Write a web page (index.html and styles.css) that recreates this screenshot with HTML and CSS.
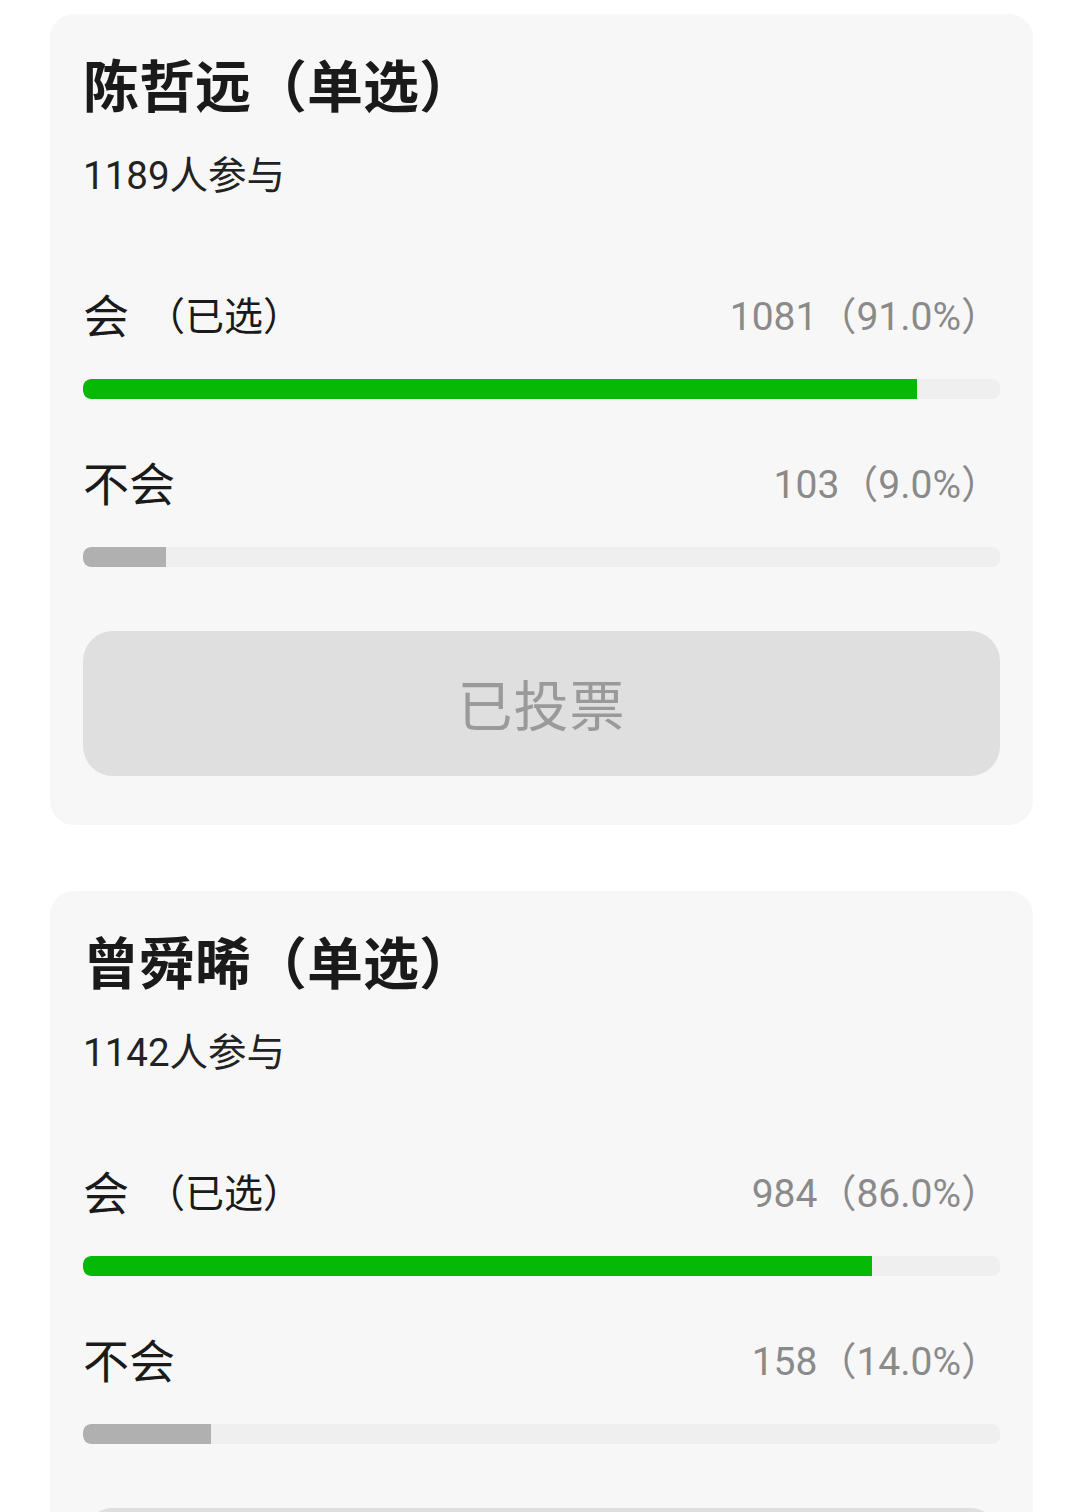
FILE: index.html
```html
<!DOCTYPE html>
<html lang="zh-CN">
<head>
    <meta charset="UTF-8" />
    <meta name="viewport" content="width=device-width, initial-scale=1" />
    <title>投票</title>
    <link rel="stylesheet" href="styles.css">
</head>
<body>
    <main class="page">
        <section class="poll-card">
            <h1 class="poll-title">陈哲远（单选）</h1>
            <p class="poll-count">1189人参与</p>
            <div class="option">
                <div class="option-row">
                    <span class="option-label">会<span class="option-tag">（已选）</span></span>
                    <span class="option-num">1081（91.0%）</span>
                </div>
                <div class="track"><div class="fill fill-selected" style="width:91%"></div></div>
            </div>
            <div class="option">
                <div class="option-row">
                    <span class="option-label">不会</span>
                    <span class="option-num">103（9.0%）</span>
                </div>
                <div class="track"><div class="fill" style="width:9%"></div></div>
            </div>
            <button class="vote-btn" disabled>已投票</button>
        </section>

        <section class="poll-card">
            <h1 class="poll-title">曾舜晞（单选）</h1>
            <p class="poll-count">1142人参与</p>
            <div class="option">
                <div class="option-row">
                    <span class="option-label">会<span class="option-tag">（已选）</span></span>
                    <span class="option-num">984（86.0%）</span>
                </div>
                <div class="track"><div class="fill fill-selected" style="width:86%"></div></div>
            </div>
            <div class="option">
                <div class="option-row">
                    <span class="option-label">不会</span>
                    <span class="option-num">158（14.0%）</span>
                </div>
                <div class="track"><div class="fill" style="width:14%"></div></div>
            </div>
            <button class="vote-btn" disabled>已投票</button>
        </section>
    </main>
</body>
</html>
```

FILE: styles.css
```css
/* Base */
* {
    box-sizing: border-box;
}
body {
    margin: 0;
    background: #fff;
    color: #1a1a1a;
    font-family: Roboto, "Noto Sans CJK SC", sans-serif;
}
.page {
    padding: 14px 47px 0 50px;
    display: flex;
    flex-direction: column;
    gap: 66px;
}

/* Card */
.poll-card {
    background: #f7f7f7;
    border-radius: 24px;
    padding: 38px 33px 49px;
}
.poll-title {
    margin: 0;
    font-family: "Noto Sans CJK SC", sans-serif;
    font-size: 56px;
    line-height: 62px;
    font-weight: 700;
    color: #1a1a1a;
}
.poll-count {
    margin: 40px 0 0;
    font-size: 38.5px;
    line-height: 44px;
    color: #222;
}

/* Options */
.option {
    margin-top: 54px;
}
.poll-count + .option {
    margin-top: 87px;
}
.option-row {
    display: flex;
    justify-content: space-between;
    align-items: center;
    height: 56px;
    margin-bottom: 38px;
}
.option-label {
    font-size: 46px;
    color: #1a1a1a;
    display: flex;
    align-items: center;
}
.option-tag {
    font-size: 39px;
    margin-left: 17px;
}
.option-num {
    font-size: 39px;
    color: #8a8a8a;
}
.track {
    height: 20px;
    background: #efefef;
    border-radius: 8px;
    overflow: hidden;
}
.fill {
    height: 100%;
    background: #b0b0b0;
    border-radius: 8px 0 0 8px;
}
.fill-selected {
    background: #07b907;
}

/* Button */
.vote-btn {
    display: block;
    width: 100%;
    height: 145px;
    margin-top: 64px;
    border: none;
    border-radius: 30px;
    background: #dfdfdf;
    color: #9a9a9a;
    font-family: "Noto Sans CJK SC", sans-serif;
    font-size: 55px;
    letter-spacing: 1px;
    padding-bottom: 4px;
    cursor: not-allowed;
}
```
